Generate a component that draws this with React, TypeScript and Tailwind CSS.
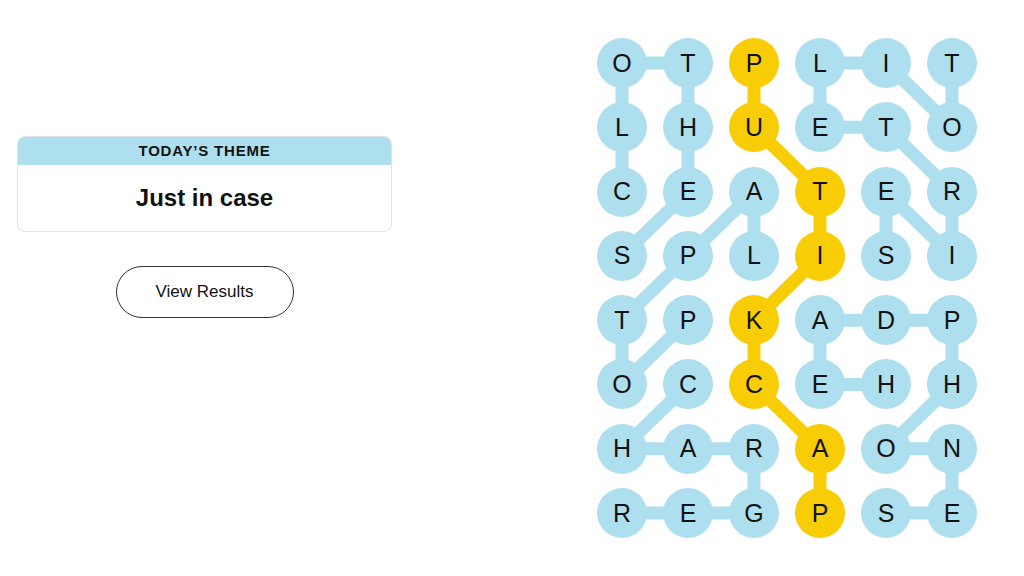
import React from 'react';

const GRID = [
  'OTPLIT',
  'LHUETO',
  'CEATER',
  'SPLISI',
  'TPKADP',
  'OCCEHH',
  'HARAON',
  'REGPSE',
];

// cells of the spangram (row, col)
const SPANGRAM: [number, number][] = [
  [0, 2], [1, 2], [2, 3], [3, 3], [4, 2], [5, 2], [6, 3], [7, 3],
];

// found theme words, as paths of cells
const WORDS: [number, number][][] = [
  [[2, 0], [1, 0], [0, 0], [0, 1], [1, 1], [2, 1], [3, 0]],
  [[0, 5], [1, 5], [0, 4], [0, 3], [1, 3], [1, 4], [2, 5], [3, 5], [2, 4], [3, 4]],
  [[3, 2], [2, 2], [3, 1], [4, 0], [5, 0], [4, 1]],
  [[5, 1], [6, 0], [6, 1], [6, 2], [7, 2], [7, 1], [7, 0]],
  [[5, 4], [5, 3], [4, 3], [4, 4], [4, 5], [5, 5], [6, 4], [6, 5], [7, 5], [7, 4]],
];

const COL = 66;
const ROW = 64.3;
const cx = (c: number) => 25 + c * COL;
const cy = (r: number) => 25 + r * ROW;

function Path({ cells, color }: { cells: [number, number][]; color: string }) {
  const points = cells.map(([r, c]) => `${cx(c)},${cy(r)}`).join(' ');
  return <polyline points={points} fill="none" stroke={color} strokeWidth={13} strokeLinejoin="round" />;
}

function Board() {
  const isSpan = (r: number, c: number) => SPANGRAM.some(([a, b]) => a === r && b === c);
  return (
    <div className="relative">
      <svg className="absolute inset-0" width={380} height={501} viewBox="0 0 380 501">
        {WORDS.map((w, i) => (
          <Path key={i} cells={w} color="#aedfee" />
        ))}
        <Path cells={SPANGRAM} color="#f8cd05" />
      </svg>
      <div className="relative grid grid-cols-[repeat(6,50px)] gap-x-[16px] gap-y-[14.3px]">
        {GRID.flatMap((row, r) =>
          row.split('').map((ch, c) => (
            <div
              key={`${r}-${c}`}
              className={`flex h-[50px] w-[50px] items-center justify-center rounded-full text-[25px] leading-none text-[#121212] ${
                isSpan(r, c) ? 'bg-[#f8cd05]' : 'bg-[#aedfee]'
              }`}
            >
              {ch}
            </div>
          ))
        )}
      </div>
    </div>
  );
}

export default function App() {
  return (
    <div className="flex h-[576px] w-[1024px] bg-white font-['Liberation_Sans',Arial,sans-serif]">
      {/* Theme + results */}
      <div className="ml-[17px] mt-[136px] flex w-[375px] flex-col items-center">
        <div className="w-full overflow-hidden rounded-[8px] border border-[#e2e2e2]">
          <div className="flex h-[28px] items-center justify-center bg-[#aedfee] text-[15px] font-bold tracking-[0.8px] text-[#121212]">
            TODAY’S THEME
          </div>
          <div className="flex h-[66px] items-center justify-center text-[24px] font-bold text-[#121212]">
            Just in case
          </div>
        </div>
        <button className="mt-[34px] flex h-[52px] w-[178px] items-center justify-center rounded-full border border-[#333] text-[17px] text-[#121212]">
          View Results
        </button>
      </div>

      {/* Board */}
      <div className="ml-[205px] mt-[38px]">
        <Board />
      </div>
    </div>
  );
}
